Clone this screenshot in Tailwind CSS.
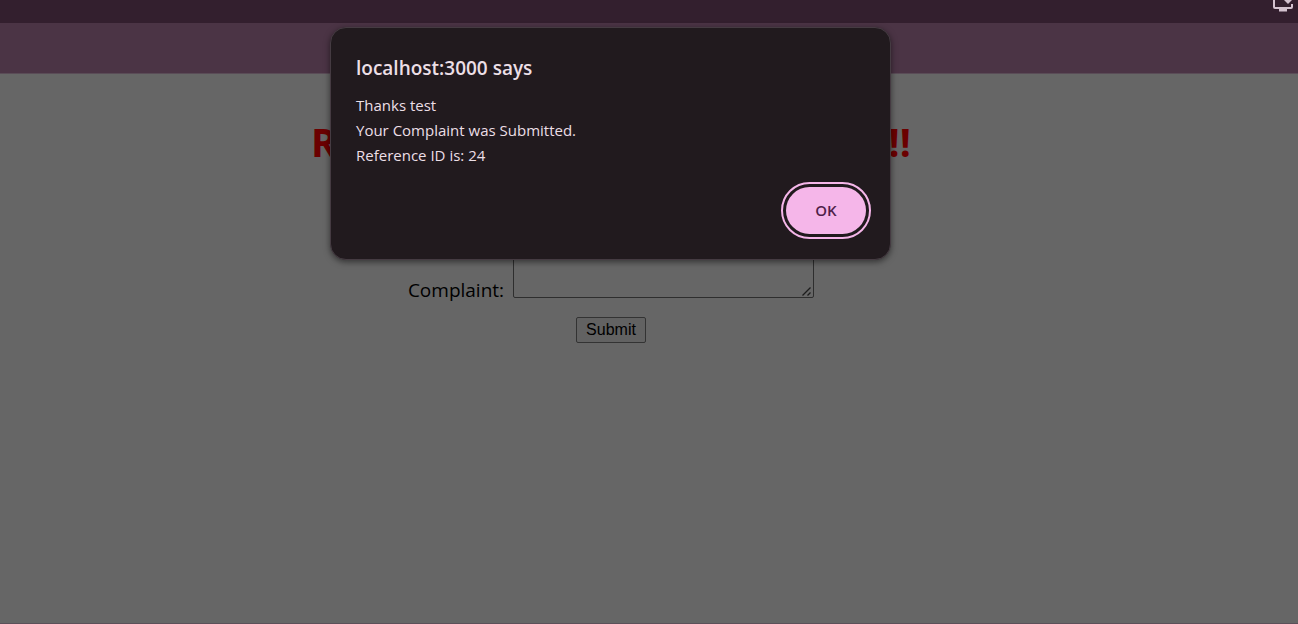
<!DOCTYPE html>
<html lang="en">
<head>
<meta charset="utf-8">
<title>Complaint</title>
<script src="https://cdn.jsdelivr.net/npm/@tailwindcss/browser@4"></script>
</head>
<body class="min-h-screen flex flex-col bg-[#666666] font-['Segoe_UI','Open_Sans',sans-serif] text-black relative overflow-hidden">
  <header>
    <div class="h-[23px] bg-[#331f2e] flex justify-end pr-1">
      <svg class="w-[22px] h-3" viewBox="0 0 22 12" fill="none" aria-hidden="true">
        <path d="M2 0V7Q2 8 3 8H19Q20 8 20 7V4" stroke="#d4c2cf" stroke-width="2"/>
        <path d="M7 8H15V11.500H7Z" fill="#d4c2cf"/>
        <path d="M12 0H20L16 4Z" fill="#d4c2cf"/>
      </svg>
    </div>
    <div class="h-[51px] bg-[#4b3445] border-b border-[#5a4c57]"></div>
  </header>
  <main class="flex-1 flex flex-col items-center pr-[76px] pt-10 border-b border-[#5b5059]">
    <h1 class="text-[39px] leading-[56px] font-bold text-[#6b0000] whitespace-nowrap">Register Your Complaint Here!!</h1>
    <form class="mt-4 flex flex-col items-center">
      <div class="flex items-end gap-[9px]">
        <label for="complaint" class="text-[19px] leading-7 -mb-1.5">Complaint:</label>
        <div class="relative flex">
          <textarea id="complaint" class="w-[301px] h-28 border border-[#2e2e2e] rounded-xs bg-transparent resize-none"></textarea>
          <svg class="absolute right-[3px] bottom-0.5 w-[9px] h-[9px] pointer-events-none" viewBox="0 0 9 9" stroke="#1c1c1c" stroke-width="1.300" aria-hidden="true">
            <path d="M0.500 8.500L8.500 0.500M5.500 8.500L8.500 5.500"/>
          </svg>
        </div>
      </div>
      <button type="button" class="mt-[19px] w-[70px] h-[26px] border border-[#333333] rounded-xs bg-[#626262] font-['Liberation_Sans',sans-serif] text-base leading-6">Submit</button>
    </form>
  </main>
  <div class="absolute inset-x-0 top-[27px] flex justify-center pr-[77px]">
    <div role="dialog" aria-labelledby="title" class="w-[561px] flex flex-col rounded-2xl bg-[#211a1e] border border-[#453b42] shadow-[0_2px_6px_rgba(0,0,0,0.5)] text-[#ecdfe6] pl-[25px] pr-6 pt-6 pb-[25px]">
      <h2 id="title" class="text-[19px] leading-8 font-semibold">localhost:3000 says</h2>
      <p class="mt-[9px] text-[15px] leading-[25px]">Thanks test<br>Your Complaint was Submitted.<br>Reference ID is: 24</p>
      <button type="button" class="self-end mt-[19px] w-20 h-[47px] rounded-[24px] bg-[#f5b6e9] text-[#4f1f49] text-[15px] font-semibold outline-2 outline-offset-3 outline-[#f5b6e9]">OK</button>
    </div>
  </div>
</body>
</html>
